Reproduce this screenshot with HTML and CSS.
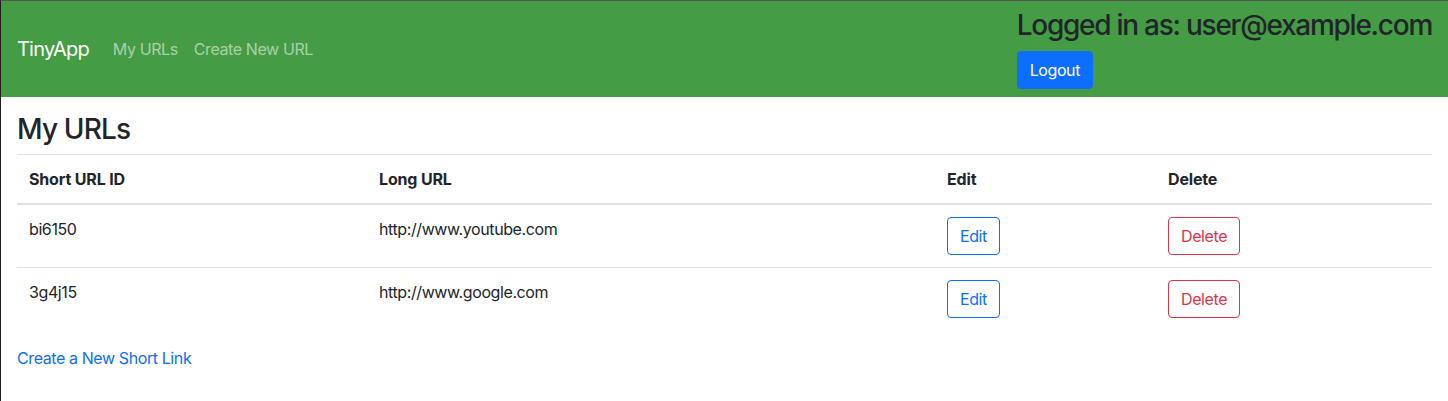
FILE: index.html
```html
<!DOCTYPE html>
<html lang="en">
<head>
<meta charset="utf-8">
<title>TinyApp</title>
<link rel="stylesheet" href="styles.css">
</head>
<body>
<nav class="navbar">
  <div class="nav-left">
    <a class="brand" href="#">TinyApp</a>
    <a class="nav-link" href="#">My URLs</a>
    <a class="nav-link" href="#">Create New URL</a>
  </div>
  <div class="nav-right">
    <h3 class="login-title">Logged in as: user@example.com</h3>
    <button class="btn btn-primary" type="button">Logout</button>
  </div>
</nav>
<main class="content">
  <h3 class="page-title">My URLs</h3>
  <table class="url-table">
    <thead>
      <tr>
        <th class="col-id">Short URL ID</th>
        <th class="col-long">Long URL</th>
        <th class="col-edit">Edit</th>
        <th class="col-del">Delete</th>
      </tr>
    </thead>
    <tbody>
      <tr>
        <td>bi6150</td>
        <td>http://www.youtube.com</td>
        <td><button class="btn btn-outline-primary" type="button">Edit</button></td>
        <td><button class="btn btn-outline-danger" type="button">Delete</button></td>
      </tr>
      <tr>
        <td>3g4j15</td>
        <td>http://www.google.com</td>
        <td><button class="btn btn-outline-primary" type="button">Edit</button></td>
        <td><button class="btn btn-outline-danger" type="button">Delete</button></td>
      </tr>
    </tbody>
  </table>
  <a class="new-link" href="#">Create a New Short Link</a>
</main>
</body>
</html>
```
FILE: styles.css
```css
* { box-sizing: border-box; }
html, body { margin: 0; padding: 0; }
body {
  font-family: Inter, "Noto Sans", "Liberation Sans", sans-serif;
  font-size: 16px;
  line-height: 24px;
  letter-spacing: -0.025em;
  color: #212529;
  background: #fff;
  border-top: 1px solid #555;
  border-left: 1px solid #1e1e1e;
  min-height: 401px;
}
a { text-decoration: none; }

.navbar {
  display: flex;
  align-items: center;
  justify-content: space-between;
  background: #449c45;
  padding: 8px 16px;
}
.nav-left { display: flex; align-items: center; }
.brand {
  color: #fff;
  font-size: 20px;
  line-height: 30px;
  letter-spacing: -0.04em;
  margin-right: 16px;
}
.nav-link {
  color: rgba(255, 255, 255, 0.55);
  padding: 8px;
}
.nav-right { display: flex; flex-direction: column; align-items: flex-start; }
.login-title {
  margin: 0 0 8px;
  font-size: 28px;
  line-height: 1.2;
  font-weight: 500;
  letter-spacing: -0.045em;
  color: #212529;
}

.btn {
  font-family: inherit;
  font-size: 16px;
  line-height: 24px;
  letter-spacing: -0.025em;
  padding: 6px 12px;
  border: 1px solid transparent;
  border-radius: 4px;
  background: transparent;
  cursor: pointer;
}
.btn-primary { background: #0d6efd; border-color: #0d6efd; color: #fff; }
.btn-outline-primary { color: #0d6efd; border-color: #0d6efd; }
.btn-outline-danger { color: #dc3545; border-color: #dc3545; }

.content { padding: 16px 16px 0; }
.page-title {
  margin: 0 0 8px;
  font-size: 28px;
  line-height: 1.2;
  font-weight: 500;
  letter-spacing: -0.03em;
}
.url-table {
  width: 100%;
  border-collapse: collapse;
  margin-bottom: 16px;
}
.url-table th, .url-table td {
  padding: 12px;
  text-align: left;
  vertical-align: top;
  border-top: 1px solid #dee2e6;
}
.url-table thead th {
  font-weight: 700;
  letter-spacing: -0.01em;
  border-bottom: 2px solid #dee2e6;
}
.col-id { width: 350px; }
.col-long { width: 568px; }
.col-edit { width: 221px; }
.new-link { color: #0d6efd; display: inline-block; }
```
